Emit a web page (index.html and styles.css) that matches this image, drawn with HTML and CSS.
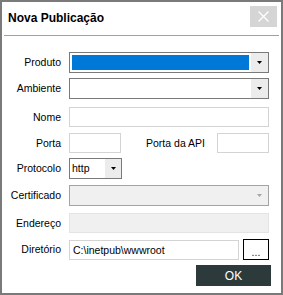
FILE: index.html
```html
<!DOCTYPE html>
<html lang="pt">
<head>
<meta charset="utf-8">
<title>Nova Publicação</title>
<link rel="stylesheet" href="styles.css">
</head>
<body>
<div class="window">
  <header class="titlebar">
    <h1 class="title">Nova Publicação</h1>
    <button class="close" type="button" aria-label="Fechar">
      <svg width="11" height="11" viewBox="0 0 11 11"><path d="M0.5 0.5 L10.5 10.5 M10.5 0.5 L0.5 10.5" stroke="#fff" stroke-width="1.3" fill="none"/></svg>
    </button>
  </header>
  <div class="sep"></div>
  <form class="form">
    <div class="grid">
      <label class="lbl">Produto</label>
      <div class="combo">
        <div class="combo-val"><span class="selected"></span></div>
        <span class="drop"><svg width="5" height="3" viewBox="0 0 5 3"><polygon points="0,0 5,0 2.5,3" fill="#000"/></svg></span>
      </div>

      <label class="lbl">Ambiente</label>
      <div class="combo">
        <div class="combo-val"></div>
        <span class="drop"><svg width="5" height="3" viewBox="0 0 5 3"><polygon points="0,0 5,0 2.5,3" fill="#000"/></svg></span>
      </div>

      <label class="lbl lbl-20">Nome</label>
      <div class="text"></div>

      <label class="lbl lbl-20">Porta</label>
      <div class="porta-row">
        <div class="text small"></div>
        <span class="inline-lbl">Porta da API</span>
        <div class="text small"></div>
      </div>

      <label class="lbl">Protocolo</label>
      <div class="combo combo-small">
        <div class="combo-val">http</div>
        <span class="drop"><svg width="5" height="3" viewBox="0 0 5 3"><polygon points="0,0 5,0 2.5,3" fill="#000"/></svg></span>
      </div>

      <label class="lbl">Certificado</label>
      <div class="combo disabled">
        <div class="combo-val"></div>
        <span class="drop"><svg width="5" height="3" viewBox="0 0 5 3"><polygon points="0,0 5,0 2.5,3" fill="#a6a6a6"/></svg></span>
      </div>

      <label class="lbl lbl-20">Endereço</label>
      <div class="text disabled"></div>

      <label class="lbl">Diretório</label>
      <div class="dir-row">
        <div class="text dir">C:\inetpub\wwwroot</div>
        <button class="browse" type="button">...</button>
      </div>
    </div>
    <div class="actions">
      <button class="ok" type="button">OK</button>
    </div>
  </form>
</div>
</body>
</html>
```

FILE: styles.css
```css
* { box-sizing: border-box; }

html, body {
  margin: 0;
  padding: 0;
  background: #fff;
}

body {
  font-family: "Liberation Sans", Arial, sans-serif;
  font-size: 10.5px;
  color: #000;
}

.window {
  width: 283px;
  height: 295px;
  border: 2px solid #7a7a7a;
  background: #fff;
}

.titlebar {
  display: flex;
  justify-content: space-between;
  align-items: flex-start;
  height: 33px;
  padding: 4px 4px 0 6px;
}

.title {
  margin: 5px 0 0 0;
  font-size: 12px;
  line-height: 14px;
  font-weight: bold;
  color: #000;
}

.close {
  width: 27px;
  height: 21px;
  border: 0;
  padding: 0;
  margin: 0;
  background: #d5d5d5;
  display: flex;
  align-items: center;
  justify-content: center;
}

.sep {
  height: 1px;
  margin: 0 2px;
  background: #a0a0a0;
}

.form {
  padding-top: 16px;
}

.grid {
  display: grid;
  grid-template-columns: 59px 200px;
  grid-template-rows: 26px 29px 26px 25px 27px 28px 26px 21px;
  column-gap: 8px;
  align-items: start;
}

.lbl {
  height: 21px;
  line-height: 21px;
  text-align: right;
  white-space: nowrap;
}

.lbl-20 {
  height: 20px;
  line-height: 20px;
}

.combo {
  display: flex;
  height: 21px;
  border: 1px solid #7a7a7a;
  background: #fff;
}

.combo-val {
  flex: 1;
  padding: 2px;
  line-height: 15px;
}

.selected {
  display: block;
  height: 15px;
  background: #0078d7;
}

.drop {
  width: 17px;
  background: #ececec;
  display: flex;
  align-items: center;
  justify-content: center;
}

.combo-small {
  width: 53px;
}

.combo-small .drop {
  width: 16px;
}

.combo.disabled {
  border-color: #a3a3a3;
  background: #f0f0f0;
}

.combo.disabled .drop {
  background: #f0f0f0;
}

.text {
  height: 20px;
  border: 1px solid #d4d4d4;
  background: #fff;
  padding: 0 2px;
  line-height: 18px;
  white-space: nowrap;
}

.text.disabled {
  background: #f0f0f0;
  border-color: #e4e4e4;
}

.porta-row {
  display: flex;
  align-items: center;
}

.text.small {
  width: 52px;
  flex: none;
}

.inline-lbl {
  flex: 1;
  text-align: right;
  padding-right: 12px;
  white-space: nowrap;
}

.dir-row {
  display: flex;
  gap: 4px;
}

.text.dir {
  flex: 1;
  height: 20px;
  margin-top: 1px;
  padding-left: 3px;
}

.browse {
  width: 26px;
  height: 21px;
  border: 1px solid #000;
  background: #fff;
  padding: 4px 0 0 0;
  margin: 0;
  font-family: "Liberation Sans", Arial, sans-serif;
  font-size: 10.5px;
  line-height: 14px;
  color: #222;
}

.actions {
  display: flex;
  justify-content: flex-end;
  padding: 5px 10px 0 0;
}

.ok {
  width: 75px;
  height: 21px;
  border: 0;
  padding: 0;
  margin: 0;
  background: #2d3a3c;
  color: #fff;
  font-family: "Liberation Sans", Arial, sans-serif;
  font-size: 12px;
}
```
